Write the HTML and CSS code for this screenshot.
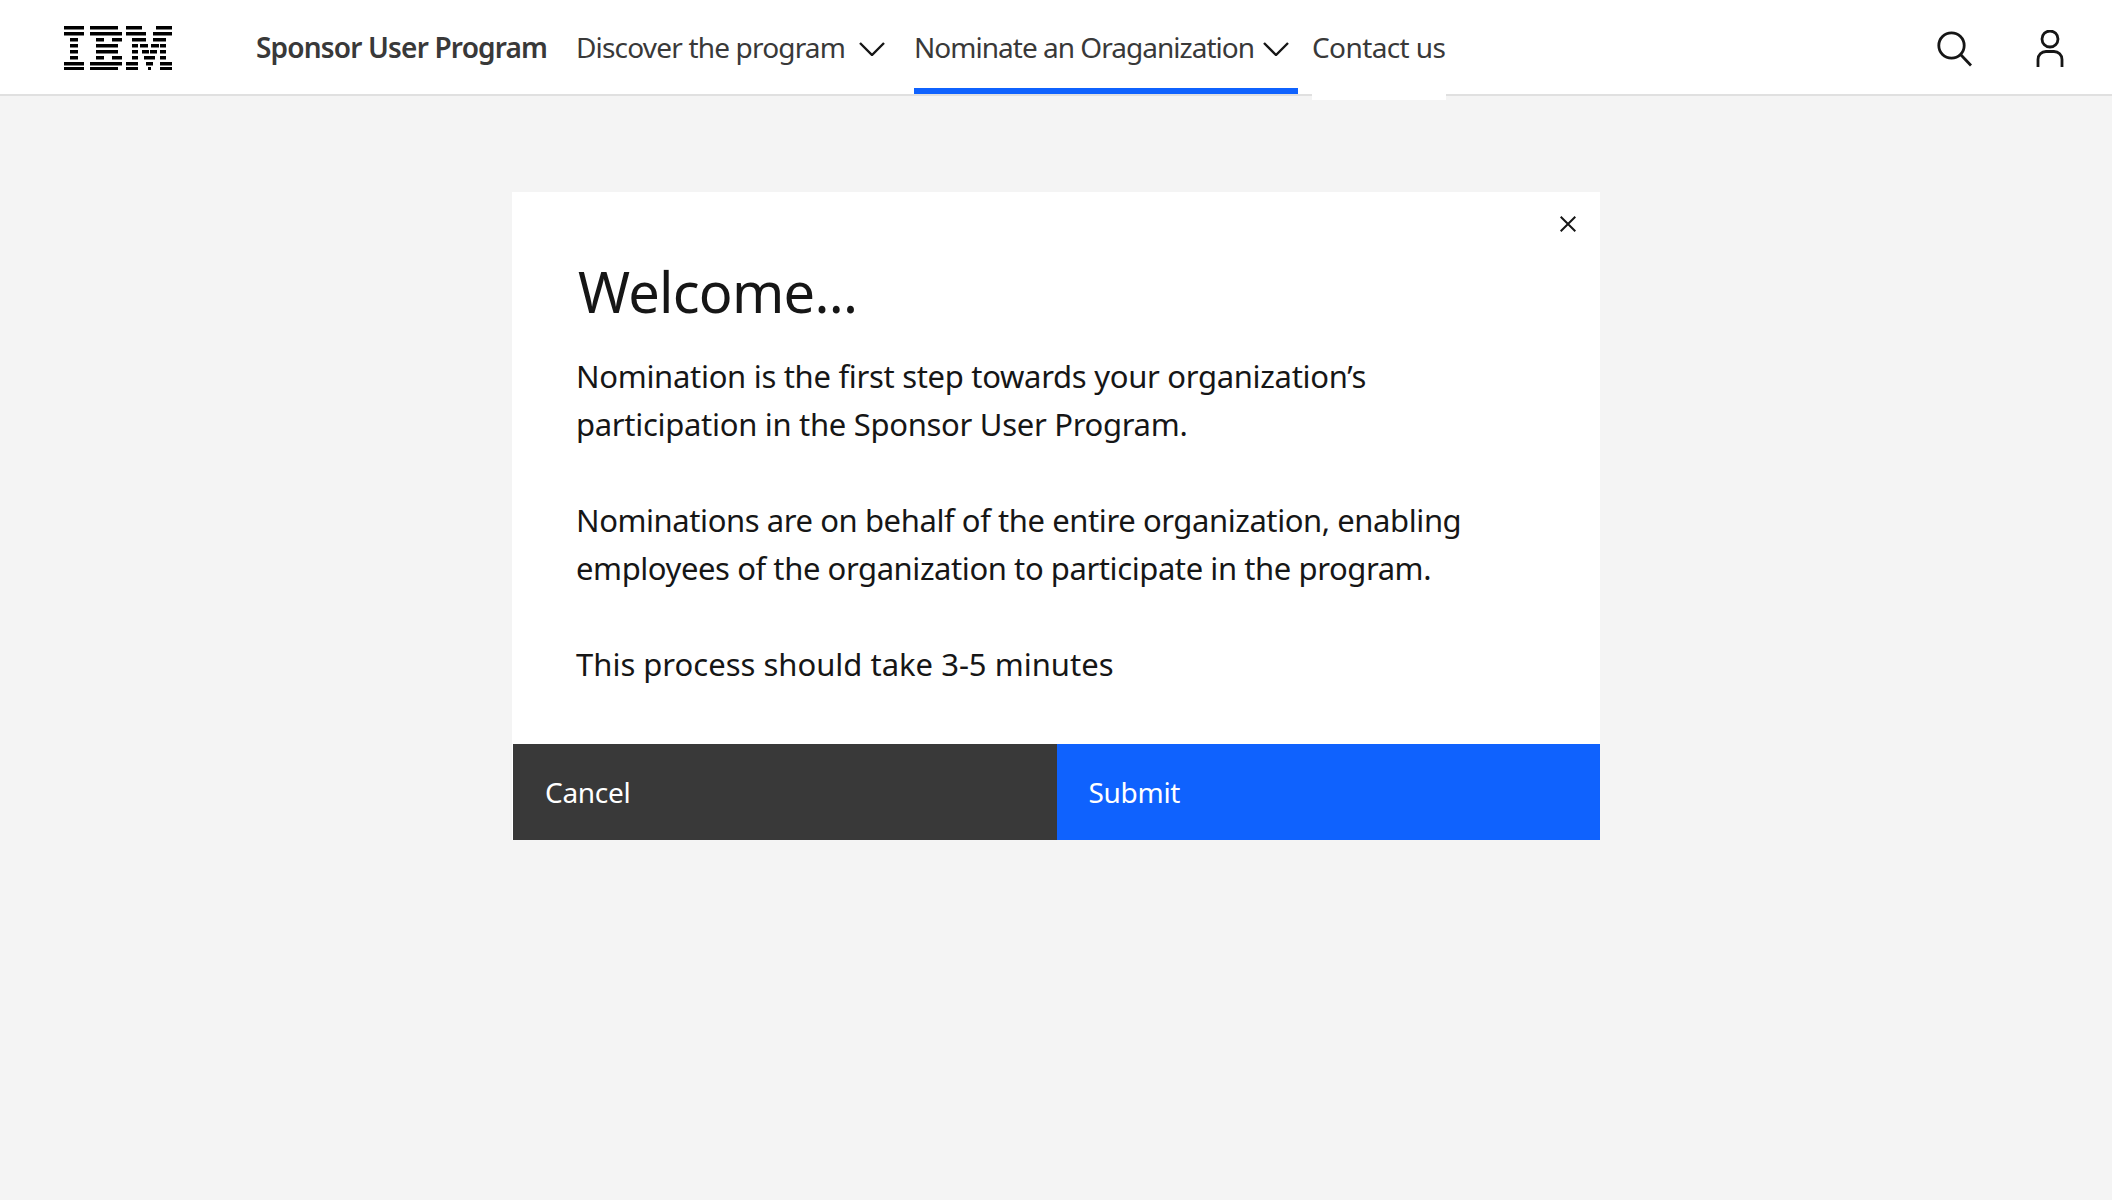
FILE: index.html
```html
<!DOCTYPE html>
<html lang="en">
<head>
<meta charset="utf-8">
<title>Sponsor User Program</title>
<link rel="stylesheet" href="styles.css">
</head>
<body>
<header class="header">
  <svg class="logo" width="108" height="44" viewBox="0 0 108 44" fill="#000" aria-label="IBM">
    <path d="M0 0h20v3.4H0zM26 0h28v3.4H26zM62 0h16v3.4H62zM92 0h16v3.4H92z"/>
    <path d="M0 6h20v3.4H0zM26 6h32v3.4H26zM62 6h20v3.4H62zM89 6h19v3.4H89z"/>
    <path d="M6 12h8v3.4H6zM32 12h8v3.4h-8zM48 12h10v3.4H48zM68 12h14v3.4H68zM89 12h13v3.4H89z"/>
    <path d="M6 18h8v3.4H6zM32 18h22v3.4H32zM68 18h6v3.4h-6zM76 18h8v3.4h-8zM87 18h8v3.4h-8zM96 18h6v3.4h-6z"/>
    <path d="M6 24h8v3.4H6zM32 24h22v3.4H32zM68 24h6v3.4h-6zM78 24h7v3.4h-7zM86 24h7v3.4h-7zM96 24h6v3.4h-6z"/>
    <path d="M6 30h8v3.4H6zM32 30h8v3.4h-8zM48 30h10v3.4H48zM68 30h6v3.4h-6zM80 30h11v3.4H80zM96 30h6v3.4h-6z"/>
    <path d="M0 36h20v3.4H0zM26 36h32v3.4H26zM62 36h12v3.4H62zM82 36h7v3.4h-7zM96 36h12v3.4H96z"/>
    <path d="M0 41h20v3H0zM26 41h28v3H26zM62 41h12v3H62zM84 41h3v3h-3zM96 41h12v3H96z"/>
  </svg>
  <div class="brand">Sponsor User Program</div>
  <nav class="nav">
    <a class="nav-item nav-discover">Discover the program
      <svg class="chevron" width="26" height="14" viewBox="0 0 26 14"><path d="M1 1l12 12L25 1"/></svg>
    </a>
    <a class="nav-item nav-active">Nominate an Oraganization
      <svg class="chevron" width="26" height="14" viewBox="0 0 26 14"><path d="M1 1l12 12L25 1"/></svg>
    </a>
    <a class="nav-item nav-contact">Contact us</a>
  </nav>
  <div class="tools">
    <svg class="icon-search" width="36" height="36" viewBox="0 0 36 36"><circle cx="14.5" cy="14.5" r="12.7"/><path d="M23.8 23.8L34 34.5"/></svg>
    <svg class="icon-user" width="28" height="38" viewBox="0 0 28 38"><circle cx="14" cy="9" r="8"/><path d="M2 37v-7.5a8 8 0 0 1 8-8h8a8 8 0 0 1 8 8V37"/></svg>
  </div>
</header>
<main class="main">
  <section class="modal">
    <svg class="close" width="16" height="16" viewBox="0 0 16 16"><path d="M.7.7l14.6 14.6M15.3.7L.7 15.3"/></svg>
    <div class="modal-body">
      <h1 class="title">Welcome...</h1>
      <p class="para">Nomination is the first step towards your organization’s participation in the Sponsor User Program.</p>
      <p class="para para-tight">Nominations are on behalf of the entire organization, enabling employees of the organization to participate in the program.</p>
      <p class="para para-loose">This process should take 3-5 minutes</p>
    </div>
    <div class="actions">
      <button class="btn btn-cancel">Cancel</button>
      <button class="btn btn-submit">Submit</button>
    </div>
  </section>
</main>
</body>
</html>
```
FILE: styles.css
```css
* { box-sizing: border-box; }
html, body { margin: 0; height: 100%; }
body {
  background: #f4f4f4;
  color: #161616;
  font-family: "Noto Sans", "Open Sans", sans-serif;
  overflow: hidden;
}
.header {
  display: flex;
  align-items: flex-start;
  height: 96px;
  background: #fff;
  border-bottom: 2px solid #e0e0e0;
  padding-left: 64px;
}
.logo { margin-top: 26px; flex: none; }
.brand {
  margin-left: 84px;
  width: 320px;
  line-height: 94px;
  font-size: 28px;
  font-weight: 600;
  letter-spacing: -0.82px;
  color: #393939;
  white-space: nowrap;
}
.nav { display: flex; align-items: flex-start; font-size: 28px; color: #393939; }
.nav-item { display: flex; align-items: center; white-space: nowrap; height: 94px; background: #fff; }
.nav-discover { width: 338px; letter-spacing: -0.82px; }
.nav-discover .chevron { margin-left: 14px; }
.nav-active { width: 384px; border-bottom: 6px solid #0f62fe; padding-top: 6px; letter-spacing: -0.98px; }
.nav-active .chevron { margin-left: 9px; }
.nav-contact { margin-left: 14px; width: 134px; height: 100px; padding-bottom: 6px; letter-spacing: -0.6px; }
.chevron { flex: none; margin-top: 3px; }
.chevron path { fill: none; stroke: #161616; stroke-width: 2.4; }
.tools { margin-left: auto; display: flex; align-items: flex-start; padding-right: 48px; }
.icon-search { margin-top: 31px; margin-right: -1px; }
.icon-search circle, .icon-search path, .icon-user circle, .icon-user path { fill: none; stroke: #161616; stroke-width: 2.8; }
.icon-user { margin: 30px 0 0 64px; }
.main { display: flex; justify-content: center; padding-top: 96px; }
.modal {
  position: relative;
  width: 1088px;
  height: 648px;
  background: #fff;
  display: flex;
  flex-direction: column;
}
.close { position: absolute; top: 24px; right: 24px; }
.close path { fill: none; stroke: #161616; stroke-width: 2; }
.modal-body { flex: 1; padding: 64px 64px 0; }
.title { margin: 0 0 26px 2px; font-size: 56px; line-height: 70px; font-weight: 400; letter-spacing: -0.75px; }
.para { margin: 0 0 48px; font-size: 31px; line-height: 48px; letter-spacing: -0.3px; }
.para-tight { letter-spacing: -0.42px; }
.para-loose { letter-spacing: 0; }
.actions { display: grid; grid-template-columns: 1fr 1fr; height: 96px; padding-left: 1px; }
.btn {
  border: 0;
  margin: 0;
  text-align: left;
  color: #fff;
  font: inherit;
  font-size: 28px;
  letter-spacing: -0.3px;
  padding: 0 32px;
}
.btn-cancel { background: #393939; }
.btn-submit { background: #0f62fe; }
```
